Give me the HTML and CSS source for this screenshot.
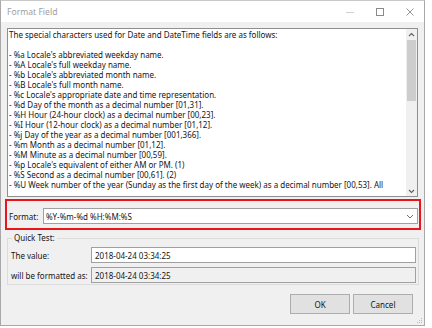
FILE: index.html
```html
<!DOCTYPE html>
<html>
<head>
<meta charset="utf-8">
<link rel="stylesheet" href="styles.css">
</head>
<body>
<div class="window">
  <div class="titlebar">
    <span class="title">Format Field</span>
    <div class="caption-btns">
      <svg class="cap" width="10" height="10" viewBox="0 0 10 10"><path d="M1 5.5H9" stroke="#d0d0d0" stroke-width="1"/></svg>
      <svg class="cap" width="10" height="10" viewBox="0 0 10 10"><rect x="1.5" y="1.5" width="7" height="7" fill="none" stroke="#8a8a8a" stroke-width="1"/></svg>
      <svg class="cap" width="10" height="10" viewBox="0 0 10 10"><path d="M1.5 1.5L8.5 8.5M8.5 1.5L1.5 8.5" stroke="#8a8a8a" stroke-width="0.9"/></svg>
    </div>
  </div>
  <div class="client">
    <div class="memo">
      <div class="memo-text">
        <div class="ln">The special characters used for Date and DateTime fields are as follows:</div>
        <div class="ln">&nbsp;</div>
        <div class="ln">- %a Locale's abbreviated weekday name.</div>
        <div class="ln">- %A Locale's full weekday name.</div>
        <div class="ln">- %b Locale's abbreviated month name.</div>
        <div class="ln">- %B Locale's full month name.</div>
        <div class="ln">- %c Locale's appropriate date and time representation.</div>
        <div class="ln">- %d Day of the month as a decimal number [01,31].</div>
        <div class="ln">- %H Hour (24-hour clock) as a decimal number [00,23].</div>
        <div class="ln">- %I Hour (12-hour clock) as a decimal number [01,12].</div>
        <div class="ln">- %j Day of the year as a decimal number [001,366].</div>
        <div class="ln">- %m Month as a decimal number [01,12].</div>
        <div class="ln">- %M Minute as a decimal number [00,59].</div>
        <div class="ln">- %p Locale's equivalent of either AM or PM. (1)</div>
        <div class="ln">- %S Second as a decimal number [00,61]. (2)</div>
        <div class="ln">- %U Week number of the year (Sunday as the first day of the week) as a decimal number [00,53]. All</div>
      </div>
      <div class="scrollbar">
        <div class="sb-arrow"><svg width="7" height="5" viewBox="0 0 7 5"><path d="M1 4L3.5 1.5L6 4" fill="none" stroke="#606060" stroke-width="1.1"/></svg></div>
        <div class="sb-track"><div class="sb-thumb"></div></div>
        <div class="sb-arrow"><svg width="7" height="5" viewBox="0 0 7 5"><path d="M1 1L3.5 3.5L6 1" fill="none" stroke="#606060" stroke-width="1.1"/></svg></div>
      </div>
    </div>
    <div class="format-row">
      <span class="lbl">Format:</span>
      <div class="combo">
        <span class="combo-text">%Y-%m-%d %H:%M:%S</span>
        <svg width="8" height="5" viewBox="0 0 8 5"><path d="M1 1L4 4L7 1" fill="none" stroke="#707070" stroke-width="1"/></svg>
      </div>
      <div class="highlight"></div>
    </div>
    <fieldset class="group">
      <legend>Quick Test:</legend>
      <div class="qrow">
        <span class="qlbl">The value:</span>
        <div class="field">2018-04-24 03:34:25</div>
      </div>
      <div class="qrow">
        <span class="qlbl">will be formatted as:</span>
        <div class="field ro">2018-04-24 03:34:25</div>
      </div>
    </fieldset>
    <div class="buttons">
      <button class="btn">OK</button>
      <button class="btn">Cancel</button>
    </div>
    <svg class="grip" width="6" height="6" viewBox="0 0 6 6"><g fill="#b8b8b8"><rect x="4" y="0" width="1" height="1"/><rect x="2" y="2" width="1" height="1"/><rect x="4" y="2" width="1" height="1"/><rect x="0" y="4" width="1" height="1"/><rect x="2" y="4" width="1" height="1"/><rect x="4" y="4" width="1" height="1"/></g></svg>
  </div>
</div>
</body>
</html>
```
FILE: styles.css
```css
* { box-sizing: border-box; }
html, body { margin: 0; padding: 0; background: #ffffff; }
body {
  font-family: "Noto Sans", "Open Sans", sans-serif;
  font-size: 8px;
  color: #151515;
}
.window {
  width: 425px;
  height: 326px;
  border: 1px solid #a8a8a8;
  border-top-color: #c8c8c8;
  display: flex;
  flex-direction: column;
  background: #f0f0f0;
}
.titlebar {
  height: 21px;
  background: #ffffff;
  display: flex;
  align-items: center;
  justify-content: space-between;
  padding-left: 6px;
}
.title {
  color: #a0a0a0;
  font-size: 8.6px;
}
.caption-btns {
  display: flex;
  align-items: center;
  gap: 20px;
  padding-right: 9px;
}
.cap { display: block; }
.client {
  flex: 1;
  position: relative;
  padding: 6px 6px 0 6px;
  display: flex;
  flex-direction: column;
}
.memo {
  height: 169px;
  background: #ffffff;
  border: 1px solid #8f8f8f;
  display: flex;
  overflow: hidden;
}
.memo-text {
  flex: 1;
  overflow: hidden;
  padding: 0 0 0 1px;
  line-height: 10px;
  white-space: nowrap;
}
.ln { height: 10px; }
.ln:first-child { margin-top: 1px; }
.scrollbar {
  width: 11px;
  background: #f0f0f0;
  display: flex;
  flex-direction: column;
}
.sb-arrow {
  height: 10px;
  display: flex;
  align-items: center;
  justify-content: center;
}
.sb-track {
  flex: 1;
  padding: 1px 1px;
}
.sb-thumb {
  height: 61px;
  background: #cdcdcd;
}
.format-row {
  position: relative;
  margin-top: 11px;
  display: flex;
  align-items: center;
  height: 16px;
}
.lbl {
  width: 36px;
  padding-left: 2px;
}
.combo {
  width: 376px;
  height: 16px;
  background: #ffffff;
  border: 1px solid #a0a0a0;
  display: flex;
  align-items: center;
  justify-content: space-between;
  padding: 0 3px 0 2px;
}
.highlight {
  position: absolute;
  left: -2px;
  right: -3px;
  top: -9px;
  bottom: -6px;
  border: 2px solid #e8161b;
  pointer-events: none;
}
.group {
  margin: 8px 0 0 0;
  padding: 3px 2px 1px 3px;
  border: 1px solid #dcdcdc;
  width: 412px;
  min-width: 0;
}
.group legend {
  padding: 0 2px;
  margin-left: 1px;
  line-height: 12px;
}
.qrow {
  display: flex;
  align-items: center;
  height: 16px;
}
.qrow + .qrow { margin-top: 4px; }
.qlbl { width: 80px; }
.field {
  flex: 1;
  height: 16px;
  border: 1px solid #a0a0a0;
  background: #ffffff;
  display: flex;
  align-items: center;
  padding-left: 3px;
}
.field.ro { background: #f0f0f0; }
.buttons {
  margin-top: 9px;
  display: flex;
  justify-content: flex-end;
  gap: 3px;
  padding-right: 5px;
}
.btn {
  width: 60px;
  height: 20px;
  background: #e1e1e1;
  border: 1px solid #adadad;
  font-family: inherit;
  font-size: 8px;
  color: #151515;
  padding: 0;
}
.grip {
  position: absolute;
  right: 1px;
  bottom: 1px;
}
```
